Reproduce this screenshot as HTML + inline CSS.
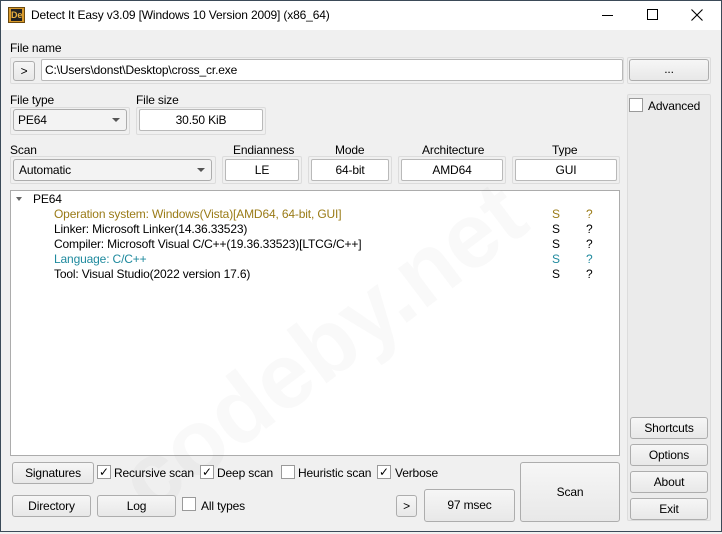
<!DOCTYPE html>
<html><head><meta charset="utf-8"><style>
*{box-sizing:border-box;margin:0;padding:0}
body{width:722px;height:532px;overflow:hidden;background:#f0f0f0;font-family:"Liberation Sans",sans-serif;font-size:12px;letter-spacing:-0.15px;color:#000;position:relative}
.a{position:absolute;white-space:nowrap}
.win{position:absolute;left:0;top:0;width:722px;height:532px;border:1px solid #3b4a58}
.tb{position:absolute;left:1px;top:1px;width:720px;height:29px;background:#fff}
.btn{position:absolute;border:1px solid #adadad;border-radius:3px;background:linear-gradient(#f6f6f6,#e8e8e8);text-align:center;font-size:12px}
.box{position:absolute;background:#fff;border:1px solid #b9b9b9;border-radius:2px;text-align:center}
.grp{position:absolute;border:1px solid #dcdcdc;border-radius:2px}
.cb{position:absolute;width:14px;height:14px;background:#fff;border:1px solid #9a9a9a;font-size:12px;line-height:12px;text-align:center}
.arr{position:absolute;width:0;height:0;border-left:4px solid transparent;border-right:4px solid transparent;border-top:4px solid #555}
</style></head><body>
<div class="win"></div>
<div class="tb"></div>
<div class="a" style="left:8px;top:7px;width:17px;height:16px;background:#d99a2b;border:1px solid #6b4a10"><div style="position:absolute;left:2px;top:1px;width:11px;height:12px;background:#222;color:#e8b040;font-size:9px;font-weight:bold;line-height:12px;text-align:center">De</div></div>
<div class="a" style="left:31px;top:8px;font-size:12px">Detect It Easy v3.09 [Windows 10 Version 2009] (x86_64)</div>
<div class="a" style="left:602px;top:15px;width:11px;height:1px;background:#000"></div>
<div class="a" style="left:647px;top:9px;width:11px;height:11px;border:1px solid #000"></div>
<svg class="a" style="left:691px;top:9px" width="12" height="12"><path d="M0.5 0.5L11.5 11.5M11.5 0.5L0.5 11.5" stroke="#000" stroke-width="1.1"/></svg>

<div class="a" style="left:10px;top:41px">File name</div>
<div class="grp" style="left:10px;top:57px;width:614px;height:27px"></div>
<div class="btn" style="left:13px;top:61px;width:22px;height:20px;line-height:18px">&gt;</div>
<div class="box" style="left:41px;top:59px;width:582px;height:22px;text-align:left;padding-left:3px;line-height:20px">C:\Users\donst\Desktop\cross_cr.exe</div>
<div class="grp" style="left:627px;top:57px;width:84px;height:27px"></div>
<div class="btn" style="left:629px;top:59px;width:80px;height:22px;line-height:18px">...</div>

<div class="a" style="left:10px;top:93px">File type</div>
<div class="grp" style="left:10px;top:107px;width:120px;height:28px"></div>
<div class="btn" style="left:13px;top:109px;width:114px;height:22px;text-align:left;padding-left:4px;line-height:20px;background:#f3f3f3">PE64</div>
<div class="arr" style="left:112px;top:118px"></div>
<div class="a" style="left:136px;top:93px">File size</div>
<div class="grp" style="left:136px;top:107px;width:130px;height:28px"></div>
<div class="box" style="left:139px;top:109px;width:124px;height:22px;line-height:20px">30.50 KiB</div>

<div class="grp" style="left:627px;top:94px;width:84px;height:427px;background:#ebebeb"></div>
<div class="cb" style="left:629px;top:98px"></div>
<div class="a" style="left:648px;top:99px">Advanced</div>

<div class="a" style="left:10px;top:143px">Scan</div>
<div class="grp" style="left:10px;top:156px;width:206px;height:28px"></div>
<div class="btn" style="left:13px;top:159px;width:199px;height:22px;text-align:left;padding-left:5px;line-height:20px;background:#f3f3f3">Automatic</div>
<div class="arr" style="left:197px;top:168px"></div>

<div class="a" style="left:233px;top:143px">Endianness</div>
<div class="grp" style="left:222px;top:156px;width:80px;height:28px"></div>
<div class="box" style="left:225px;top:159px;width:74px;height:22px;line-height:20px">LE</div>
<div class="a" style="left:335px;top:143px">Mode</div>
<div class="grp" style="left:308px;top:156px;width:84px;height:28px"></div>
<div class="box" style="left:311px;top:159px;width:78px;height:22px;line-height:20px">64-bit</div>
<div class="a" style="left:422px;top:143px">Architecture</div>
<div class="grp" style="left:398px;top:156px;width:108px;height:28px"></div>
<div class="box" style="left:401px;top:159px;width:102px;height:22px;line-height:20px">AMD64</div>
<div class="a" style="left:552px;top:143px">Type</div>
<div class="grp" style="left:512px;top:156px;width:108px;height:28px"></div>
<div class="box" style="left:515px;top:159px;width:102px;height:22px;line-height:20px">GUI</div>

<div class="a" style="left:10px;top:190px;width:610px;height:266px;background:#fff;border:1px solid #acacac"></div>
<div class="arr" style="left:16px;top:197px;border-top-color:#666;border-width:4px 3px 0 3px"></div>
<div class="a" style="left:33px;top:192px">PE64</div>
<div class="a" style="left:54px;top:207px;color:#9a7b17">Operation system: Windows(Vista)[AMD64, 64-bit, GUI]</div>
<div class="a" style="left:54px;top:222px">Linker: Microsoft Linker(14.36.33523)</div>
<div class="a" style="left:54px;top:237px">Compiler: Microsoft Visual C/C++(19.36.33523)[LTCG/C++]</div>
<div class="a" style="left:54px;top:252px;color:#1f8a9e">Language: C/C++</div>
<div class="a" style="left:54px;top:267px">Tool: Visual Studio(2022 version 17.6)</div>
<div class="a" style="left:552px;top:207px;color:#9a7b17">S</div><div class="a" style="left:586px;top:207px;color:#9a7b17">?</div>
<div class="a" style="left:552px;top:222px">S</div><div class="a" style="left:586px;top:222px">?</div>
<div class="a" style="left:552px;top:237px">S</div><div class="a" style="left:586px;top:237px">?</div>
<div class="a" style="left:552px;top:252px;color:#1f8a9e">S</div><div class="a" style="left:586px;top:252px;color:#1f8a9e">?</div>
<div class="a" style="left:552px;top:267px">S</div><div class="a" style="left:586px;top:267px">?</div>

<div class="a" style="left:100px;top:450px;font-size:92px;font-weight:bold;letter-spacing:0;color:rgba(120,120,120,0.045);transform:rotate(-37deg);transform-origin:0 0">codeby.net</div>

<div class="btn" style="left:630px;top:417px;width:78px;height:22px;line-height:20px">Shortcuts</div>
<div class="btn" style="left:630px;top:444px;width:78px;height:22px;line-height:20px">Options</div>
<div class="btn" style="left:630px;top:471px;width:78px;height:22px;line-height:20px">About</div>
<div class="btn" style="left:630px;top:498px;width:78px;height:22px;line-height:20px">Exit</div>

<div class="btn" style="left:12px;top:462px;width:82px;height:22px;line-height:20px">Signatures</div>
<div class="cb" style="left:97px;top:465px">✓</div><div class="a" style="left:114px;top:466px">Recursive scan</div>
<div class="cb" style="left:200px;top:465px">✓</div><div class="a" style="left:217px;top:466px">Deep scan</div>
<div class="cb" style="left:281px;top:465px"></div><div class="a" style="left:298px;top:466px">Heuristic scan</div>
<div class="cb" style="left:377px;top:465px">✓</div><div class="a" style="left:395px;top:466px">Verbose</div>

<div class="btn" style="left:12px;top:495px;width:79px;height:22px;line-height:20px">Directory</div>
<div class="btn" style="left:97px;top:495px;width:79px;height:22px;line-height:20px">Log</div>
<div class="cb" style="left:182px;top:497px"></div><div class="a" style="left:201px;top:499px">All types</div>
<div class="btn" style="left:396px;top:495px;width:21px;height:22px;line-height:20px">&gt;</div>
<div class="btn" style="left:424px;top:489px;width:91px;height:33px;line-height:31px">97 msec</div>
<div class="btn" style="left:520px;top:462px;width:100px;height:60px;line-height:58px">Scan</div>
</body></html>
